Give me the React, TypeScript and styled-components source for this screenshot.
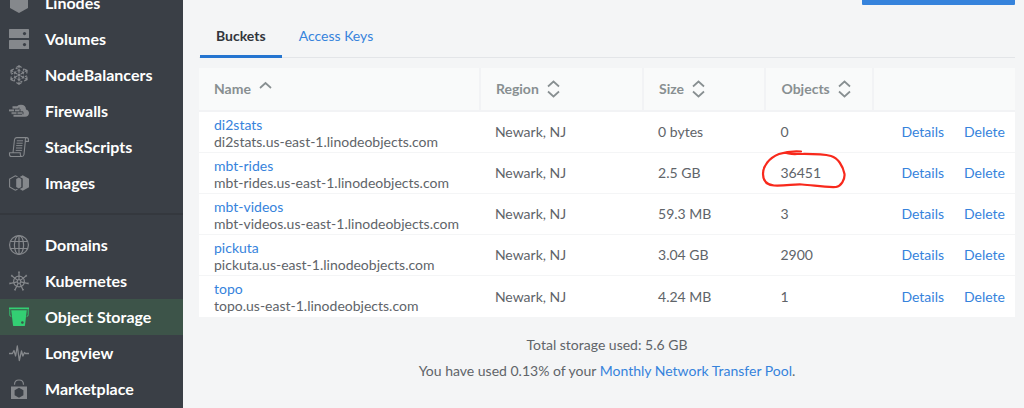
import React from 'react';
import styled, { createGlobalStyle } from 'styled-components';

const GlobalStyle = createGlobalStyle`
  *, *::before, *::after { box-sizing: border-box; }
  body {
    margin: 0;
    background: #f4f5f6;
    color: #606469;
    font-family: Lato, "Open Sans", sans-serif;
    font-size: 14px;
    line-height: 17px;
  }
`;

const Page = styled.div`
  display: grid;
  grid-template-columns: 183px minmax(0, 1fr);
  height: 100vh;
  overflow: hidden;
`;

const Sidebar = styled.nav`
  background: #3a3f46;
  overflow: hidden;
`;

/* The menu is shown scrolled partly past its first entry. */
const MenuList = styled.ul<{ $scrolled?: boolean }>`
  list-style: none;
  margin: ${(p) => (p.$scrolled ? '-15px' : '0')} 0 0;
  padding: 0;
`;

const MenuLink = styled.a<{ $active?: boolean }>`
  display: flex;
  align-items: center;
  gap: 16px;
  height: 36px;
  padding: 0 9px;
  color: #fff;
  font-size: 16px;
  font-weight: 700;
  line-height: 20px;
  text-decoration: none;
  white-space: nowrap;
  background: ${(p) => (p.$active ? '#3d5449' : 'transparent')};
  svg { color: ${(p) => (p.$active ? '#33cf73' : '#85888c')}; }
`;

const Divider = styled.hr`
  height: 2px;
  margin: 12px 0;
  border: 0;
  background: #34383e;
`;

const Glyph = styled.svg`
  flex: none;
  width: 20px;
  height: 20px;
  overflow: visible;
`;

const Main = styled.main`
  padding: 0 9px 0 16px;
`;

const Actions = styled.div`
  display: flex;
  justify-content: flex-end;
  height: 5px;
`;

const CreateButton = styled.button`
  width: 153px;
  padding: 0;
  border: 0;
  border-radius: 0 0 1px 1px;
  background: #3683dc;
`;

const Tabs = styled.div`
  display: flex;
  gap: 1px;
  margin: 10px 0;
  padding-left: 1px;
  height: 43px;
  box-shadow: inset 0 -1px 0 #e3e5e8;
`;

const Tab = styled.button<{ $active?: boolean }>`
  padding: 0 16px;
  border: 0;
  border-bottom: 3px solid ${(p) => (p.$active ? '#2575d0' : 'transparent')};
  background: transparent;
  color: ${(p) => (p.$active ? '#32363c' : '#3683dc')};
  font: ${(p) => (p.$active ? 700 : 400)} 14px/17px Lato, sans-serif;
`;

const Table = styled.table`
  width: 100%;
  table-layout: fixed;
  border-collapse: separate;
  border-spacing: 0;
  background: #fff;
`;

const Col = styled.col<{ $width: string }>`
  width: ${(p) => p.$width};
`;

const HeadCell = styled.th`
  height: 44px;
  padding: 0 15px 1px;
  background: #f9fafa;
  border-bottom: 2px solid #f2f3f5;
  color: #888f91;
  font-weight: 700;
  text-align: left;
  & + & { border-left: 2px solid #f2f3f5; }
`;

const SortButton = styled.button`
  display: flex;
  align-items: center;
  gap: 8px;
  padding: 0;
  border: 0;
  background: none;
  color: inherit;
  font: inherit;
`;

const SortIcon = styled.svg`
  width: 13px;
  height: 18px;
  fill: none;
  stroke: currentColor;
  stroke-width: 1.7;
`;

const Cell = styled.td`
  height: 41px;
  padding: 0 15px 1px 16px;
  white-space: nowrap;
  tr:not(:last-child) > & { border-bottom: 1px solid #f4f5f6; }
`;

const NameCell = styled(Cell)`
  padding: 1px 15px 0;
`;

const BucketHost = styled.div``;

const TextLink = styled.a`
  color: #3683dc;
  text-decoration: none;
`;

const RowActions = styled.div`
  display: flex;
  justify-content: flex-end;
  gap: 20px;
  margin-right: -5px;
`;

const ActionButton = styled.button`
  padding: 0;
  border: 0;
  background: none;
  color: #3683dc;
  font: inherit;
`;

const Circled = styled.span`
  position: relative;
`;

const RedPen = styled.svg`
  position: absolute;
  left: -19px;
  top: -15px;
  width: 86px;
  height: 44px;
  fill: none;
  stroke: #f8291c;
  stroke-width: 2.2;
  stroke-linecap: round;
  stroke-linejoin: round;
  pointer-events: none;
`;

const Summary = styled.footer`
  display: grid;
  gap: 9px;
  padding-top: 19px;
  text-align: center;
  p { margin: 0; }
`;

const icons: Record<string, React.ReactNode> = {
  Linodes: <path fill="currentColor" d="M1 0h18v15l-9 5-9-5z" />,
  Volumes: (
    <>
      <rect x="0" y="0" width="20" height="9" rx="0.6" fill="currentColor" />
      <rect x="0" y="11" width="20" height="9" rx="0.6" fill="currentColor" />
      <circle cx="15.5" cy="4.6" r="1.6" fill="#3a3f46" />
      <circle cx="15.5" cy="15.6" r="1.6" fill="#3a3f46" />
    </>
  ),
  NodeBalancers: (
    <g fill="none" stroke="currentColor" strokeWidth="1.2">
      {[0, 60, 120, 180, 240, 300].map((a) => (
        <g key={a} transform={`rotate(${a} 10 10)`}>
          <path d="M10 8V4.800M10 3.200V.8M7.400 2.500 10 .7l2.600 1.800" />
          <path fill="currentColor" stroke="none" d="M8 6.200 10 3.600l2 2.600z" />
          <path d="M14.500 3.600v2.200" />
        </g>
      ))}
      <circle cx="10" cy="10" r="1.6" fill="currentColor" stroke="none" />
    </g>
  ),
  Firewalls: (
    <>
      <path
        fill="currentColor"
        d="M3.500 5.200H8Q9.500 3.800 12 3.800c3.200 0 5 2 5 4.600 1.800.4 3 1.900 3 3.700 0 2.200-1.600 3.700-3.800 3.700H4.500v-2.300H2.500v-2.400H0V8.100h3.500z"
      />
      <path
        fill="none"
        stroke="#3a3f46"
        strokeWidth="0.9"
        d="M0 8h10M0 10.800h14M2 13.300h11M10 8V6.500M5.500 8v2.800M11 8v2.800M8 10.800v2.500M14 10.800v2.500"
      />
    </>
  ),
  StackScripts: (
    <g fill="none" stroke="currentColor" strokeWidth="1.1" strokeLinejoin="round">
      <path d="M4 15.800 5.500 2.800Q5.800.6 7.600.6h10Q19.500.6 19.500 3.200V4.400H16.300V2.800Q16.300.6 17.600.6M16.300 4.400 15 17.500Q14.700 19.500 12.800 19.500H2.500Q.5 19.500.5 17.500V15.800H11.300V17.500Q11.300 19.500 12.800 19.500" />
      <path d="M7.800 3.800h6.200M7.500 6.200h6.200M7.200 8.600h6.200M7 11h6.200M6.700 13.400h6.200" strokeWidth="1" />
    </g>
  ),
  Images: (
    <>
      <path fill="none" stroke="currentColor" strokeWidth="1.1" d="M8.500 16.300 6.300 17.200.6 14V6L6.300 2.800l2.200.9" />
      <path fill="currentColor" d="M9.800 4.600 12.300 6v8l-2.500 1.400L7.200 14V6z" />
      <path fill="currentColor" d="m13.700 2.200 6.300 3.600v8.400l-6.300 3.600-3-1.700 3-1.600V5.500l-3-1.600z" />
    </>
  ),
  Domains: (
    <g fill="none" stroke="currentColor" strokeWidth="1.2">
      <circle cx="10" cy="10" r="9.4" />
      <ellipse cx="10" cy="10" rx="4.6" ry="9.4" />
      <path d="M10 .6v18.800M1.600 6.500h16.800M1.600 13.500h16.800" />
    </g>
  ),
  Kubernetes: (
    <g fill="none" stroke="currentColor" strokeWidth="1.2">
      <circle cx="10" cy="10.500" r="5.400" />
      <circle cx="10" cy="10.500" r="1.800" />
      {[0, 51.43, 102.86, 154.29, 205.71, 257.14, 308.57].map((a) => (
        <path key={a} transform={`rotate(${a} 10 10.5)`} d="M10 8.700V.8M9.100 1.200h1.800" />
      ))}
    </g>
  ),
  'Object Storage': (
    <>
      <path fill="currentColor" d="M0 .6h20v1.700H0zM2.200 3.200h15.600L16 18.200q-.1.900-1 .9H5q-.9 0-1-.9z" />
      <path fill="none" stroke="currentColor" strokeWidth="0.9" d="M.8 2.300v5.500q0 1.500 1.600 1.900M19.200 2.300v5.500q0 1.500-1.600 1.900" />
      <circle cx="13.400" cy="15.500" r="1.300" fill="#3d5449" />
    </>
  ),
  Longview: (
    <path
      fill="none"
      stroke="currentColor"
      strokeWidth="1.3"
      strokeLinejoin="round"
      d="M0 10.500h3.400L5 7.500l1.600 5.500L8.300 3l2 14.500 2.200-9.500 1.400 5 1.600-3.500 1 1H20"
    />
  ),
  Marketplace: (
    <>
      <path fill="currentColor" fillRule="evenodd" d="M2 7.500h16V20H2zM10 8.800l-4.400 2.500v4.900L10 18.800l4.400-2.600v-4.900z" />
      <path fill="none" stroke="currentColor" strokeWidth="1.2" d="M5.500 5.800C5.500 2.800 7.300 1 10 1s4.500 1.800 4.500 4.800" />
    </>
  ),
};

const computeMenu = ['Linodes', 'Volumes', 'NodeBalancers', 'Firewalls', 'StackScripts', 'Images'];
const serviceMenu = ['Domains', 'Kubernetes', 'Object Storage', 'Longview', 'Marketplace'];

const buckets = [
  { name: 'di2stats', size: '0 bytes', objects: '0' },
  { name: 'mbt-rides', size: '2.5 GB', objects: '36451', circled: true },
  { name: 'mbt-videos', size: '59.3 MB', objects: '3' },
  { name: 'pickuta', size: '3.04 GB', objects: '2900' },
  { name: 'topo', size: '4.24 MB', objects: '1' },
];

function Menu({ items, scrolled }: { items: string[]; scrolled?: boolean }) {
  return (
    <MenuList $scrolled={scrolled}>
      {items.map((item) => (
        <li key={item}>
          <MenuLink href="#" $active={item === 'Object Storage'}>
            <Glyph viewBox="0 0 20 20" aria-hidden="true">{icons[item]}</Glyph>
            {item}
          </MenuLink>
        </li>
      ))}
    </MenuList>
  );
}

function SortHeader({ label, sorted }: { label: string; sorted?: boolean }) {
  return (
    <HeadCell scope="col">
      <SortButton type="button">
        {label}
        <SortIcon viewBox="0 0 13 18" aria-hidden="true">
          <path d={sorted ? 'M1 8l5.500-5L12 8' : 'M1 6.500l5.500-5 5.500 5M1 11.500l5.500 5 5.500-5'} />
        </SortIcon>
      </SortButton>
    </HeadCell>
  );
}

export default function App() {
  return (
    <Page>
      <GlobalStyle />
      <Sidebar aria-label="Main">
        <Menu items={computeMenu} scrolled />
        <Divider />
        <Menu items={serviceMenu} />
      </Sidebar>
      <Main>
        <Actions>
          <CreateButton type="button" aria-label="Create Bucket" />
        </Actions>
        <Tabs role="tablist">
          <Tab type="button" role="tab" aria-selected="true" $active>Buckets</Tab>
          <Tab type="button" role="tab" aria-selected="false">Access Keys</Tab>
        </Tabs>
        <Table>
          <colgroup>
            <Col $width="34.3%" />
            <Col $width="20%" />
            <Col $width="15%" />
            <Col $width="13.2%" />
            <Col $width="17.5%" />
          </colgroup>
          <thead>
            <tr>
              <SortHeader label="Name" sorted />
              <SortHeader label="Region" />
              <SortHeader label="Size" />
              <SortHeader label="Objects" />
              <HeadCell aria-label="Actions" />
            </tr>
          </thead>
          <tbody>
            {buckets.map((b) => (
              <tr key={b.name}>
                <NameCell>
                  <TextLink href="#">{b.name}</TextLink>
                  <BucketHost>{b.name}.us-east-1.linodeobjects.com</BucketHost>
                </NameCell>
                <Cell>Newark, NJ</Cell>
                <Cell>{b.size}</Cell>
                <Cell>
                  {b.circled ? (
                    <Circled>
                      {b.objects}
                      <RedPen viewBox="0 0 86 44" aria-hidden="true">
                        <path d="M40 2.500C32 2 24 3 18 5C8 9 2 17 2 25C2 33 6 36 13 36.500C25 37 33 35 41 35.500C52 36 62 38.500 75 38C80 37 84 31 83.500 25C82 17 77 9 70 7C60 4.500 48 5 36 5C30 5.500 27 4 25 4" />
                      </RedPen>
                    </Circled>
                  ) : (
                    b.objects
                  )}
                </Cell>
                <Cell>
                  <RowActions>
                    <ActionButton type="button">Details</ActionButton>
                    <ActionButton type="button">Delete</ActionButton>
                  </RowActions>
                </Cell>
              </tr>
            ))}
          </tbody>
        </Table>
        <Summary>
          <p>Total storage used: 5.6 GB</p>
          <p>
            You have used 0.13% of your <TextLink href="#">Monthly Network Transfer Pool</TextLink>.
          </p>
        </Summary>
      </Main>
    </Page>
  );
}
